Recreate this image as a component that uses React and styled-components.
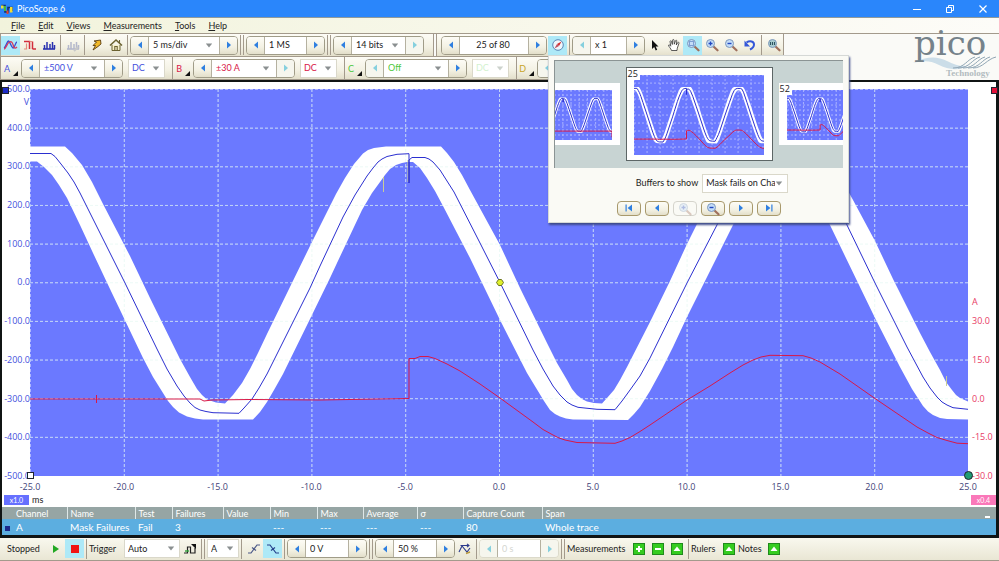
import styled, { createGlobalStyle, css } from 'styled-components'

const colors = {
  plot: '#6b79ff',
  blue: '#2b2fd0',
  axisBlue: '#4450dd',
  red: '#d81848',
  axisRed: '#e83a64',
  green: '#4cc83c',
  gold: '#c8a428',
  arrow: '#2f7fe0',
  line: '#a39a8c',
  hot: '#aee9f7',
}

const MASK_TOP = '30,146.5 65,146.5 72,153 82,165 92,182 103,204 130,256 150,298 180,359 190,377 197,389 202,395 207,399.5 216,402.5 225,403.5 233,395 242,383 250,369 258,353 267,334 310,246 320,226 336,194 345,178 354,164 363,153.5 368,150 374,148 386,146.5 441,146.5 447,153 454,162 462,175 470,190 500,245 520,288 547,343 557,363 567,380 572,389 577,395 582,399 587,401.5 594,403 602,403.5 607,398 614,390 620,380 627,367 650,322 670,281 687,244 705,208 725,171 735,157 742,151 752,147 764,146.5 816,146.5 826,156 838,173 853,200 875,241 893,279 920,333 930,352 940,370 946,382 952,390 956,395 960,398 968,401.5'
const MASK_BOTTOM = '968,419.5 947,419 940,418 933,415 928,411.5 923,406 912,389 900,367 875,318 829,223 808,181 796,166 788,162.5 780,163 768,170 756,183 734,223 707,277 687,317 673,347 662,369 650,391 640,407 634,414 628,420 573,419.5 566,418.5 560,416.5 555,414 550,410 544,401 527,373 500,320 470,258 443,206 435,191 427,178 420,168 413,162 407,162 402,163 396,165 390,169 385,175 380,182 372,193 362,210 337,263 330,278 310,319 283,374 274,390 267,402 260,412 253,419.5 203,419.5 195,418.5 187,416.5 179,412.5 173,407 168,401 163,393 153,377 143,358 110,289 93,253 80,225 67,198 59,185 52,175 44,167 37,161.5 30,161.5'
const TRACE_A = '30,153.5 51,153.5 55,156.5 61,164 68,173 74,182 80,193 95,223 125,283 157,349 167,369 177,386 184,396 190,403 195,407.5 200,410 206,411.5 213,412.7 239,413.3 244,408 252,399 259,388 267,374 310,288 320,266 343,217 355,195 367,176 373,168 378,162 382,159 387,156.5 397,154.3 409,153.7 409,183 409,160 412,157.5 425,157.5 429,159 433,162 440,170 454,192 480,243 500,282.5 533,350 543,369 553,386 560,395 567,402 572,405 578,407.3 597,409.3 615,409.7 622,401 630,390 640,376 650,358 687,283 718,223 740,182 752,165 762,157 775,154 800,154 808,157 820,172 846,223 875,283 907,347 923,377 930,388 937,397 942,402 947,405 953,407.7 968,409.3'
const TRACE_B = '30,399 200,399 204,401 212,400 250,399.5 320,400 409,398.5 409,358.5 415,358.5 420,356.5 428,356.5 435,358.5 447,364 460,371 480,384 500,398 533,422 543,429.5 553,435 559,438 565,440 577,442.5 615,443.3 622,441 630,437.5 640,431.5 650,425 687,400 710,386 730,373 743,365 753,360 761,357 770,355.3 803,355.7 811,358 820,362 840,374 875,398.5 917,427 928,433 937,437.5 947,440.5 957,443.2 968,443.7'
const FLAT_B = '30,407 968,407 968,455'

const H_LINES = [0, 1, 2, 3, 4, 5, 6, 7, 8, 9].map((n) => 89.5 + n * 38.65)
const V_LINES = [0, 1, 2, 3, 4, 5, 6, 7, 8, 9].map((n) => 30.5 + n * 93.8)

const TICKS_V = ['500.0', '400.0', '300.0', '200.0', '100.0', '0.0', '-100.0', '-200.0', '-300.0', '-400.0', '-500.0']
const TICKS_A = ['', '', '', '', '', '', '30.0', '15.0', '0.0', '-15.0', '-30.0']
const TICKS_MS = ['-25.0', '-20.0', '-15.0', '-10.0', '-5.0', '0.0', '5.0', '10.0', '15.0', '20.0', '25.0']

const COLUMNS = [
  ['Channel', 'A', 65],
  ['Name', 'Mask Failures', 68],
  ['Test', 'Fail', 37],
  ['Failures', '3', 51],
  ['Value', '', 47],
  ['Min', '---', 47],
  ['Max', '---', 46],
  ['Average', '---', 54],
  ['σ', '---', 46],
  ['Capture Count', '80', 79],
  ['Span', 'Whole trace', null],
]

/* ---------- icons ---------- */

function ArrowIcon({ back }) {
  return (
    <svg width="6" height="8" viewBox="0 0 6 8" aria-hidden="true">
      <path d={back ? 'M5 0.5v7L1 4z' : 'M1 0.5v7L5 4z'} fill="currentColor" />
    </svg>
  )
}

function EndIcon({ back }) {
  return (
    <svg width="10" height="8" viewBox="0 0 10 8" aria-hidden="true" fill="currentColor">
      {back ? <path d="M1.5 0.5h1.2v7H1.5zM8 0.5v7L3.6 4z" /> : <path d="M7.3 0.5h1.2v7H7.3zM2 0.5v7L6.4 4z" />}
    </svg>
  )
}

function ChevronIcon() {
  return (
    <svg width="8" height="5" viewBox="0 0 8 5" aria-hidden="true">
      <path d="M0.8 0.5h6.4L4 4.5z" fill="currentColor" />
    </svg>
  )
}

function AppIcon() {
  return (
    <svg width="14" height="14" viewBox="0 0 14 14" aria-hidden="true">
      <path d="M2 6V3.500h3V10h3V5.500h4V9" fill="none" stroke="#17306e" strokeWidth="1.600" />
      <path d="M1 3.500h2.500v3H1z" fill="#e8e23a" />
      <path d="M4 4h2v5H4z" fill="#46b83c" />
      <path d="M6.500 8.500h2V12h-2z" fill="#e0452c" />
      <path d="M10 5h2.500v5.500H10z" fill="#f2dc30" />
    </svg>
  )
}

function ScopeIcon() {
  return (
    <svg width="15" height="14" viewBox="0 0 15 14" fill="none" aria-hidden="true">
      <path d="M1 10C3 9 4 3 5.500 3S8 9.500 10 10s2-6 4-6" stroke="#3a4bd0" strokeWidth="1.300" />
      <path d="M1 11C3 11 4 5 6.500 4s3 1 4 4 2 2.500 3.500 1" stroke="#d83a5c" strokeWidth="1.300" />
    </svg>
  )
}

function PersistenceIcon() {
  return (
    <svg width="14" height="14" viewBox="0 0 14 14" fill="none" aria-hidden="true">
      <path d="M1 3.500h5.500v7.500M9.500 11V3.500M9.500 11H13" stroke="#d22c3c" strokeWidth="1.500" />
      <path d="M1 11h2.500V5.500M6.500 3.500h3" stroke="#e58a7c" strokeWidth="1.200" />
    </svg>
  )
}

function SpectrumIcon({ faded }) {
  return (
    <svg width="14" height="14" viewBox="0 0 14 14" fill="none" stroke={faded ? '#b4b8cc' : '#2a32b0'} aria-hidden="true">
      <path d="M1 11h12" strokeWidth="1.600" />
      <path d="M2.500 11V7M5 11V4M8 11V6M10.500 11V4M12.500 11V7" strokeWidth="1.500" />
      {faded && <path d="M8 13l4-4" stroke="#c8c8c8" strokeWidth="2" />}
    </svg>
  )
}

function BoltIcon() {
  return (
    <svg width="13" height="14" viewBox="0 0 13 14" aria-hidden="true">
      <path d="M4 3l6.500-1 .5 4-3 2.500L3 12l2.500-4.500H3L6.500 4z" fill="#f0b828" stroke="#5a3c10" strokeWidth=".9" />
    </svg>
  )
}

function HomeIcon() {
  return (
    <svg width="14" height="14" viewBox="0 0 14 14" aria-hidden="true">
      <path d="M3 7v5.500h8V7" fill="#f5efc8" stroke="#6b6230" />
      <path d="M1 7.500L7 2l6 5.500" fill="none" stroke="#6b6230" strokeWidth="1.600" />
      <path d="M5.800 12V8.500h2.400V12M10.500 2v3" fill="none" stroke="#6b6230" strokeWidth="1.100" />
    </svg>
  )
}

function CompassIcon() {
  return (
    <svg width="14" height="14" viewBox="0 0 14 14" aria-hidden="true">
      <circle cx="7" cy="7" r="5.300" fill="#eef6fc" stroke="#5c88b8" />
      <path d="M10.500 3.500L8 8 6 6z" fill="#d42a2a" />
      <path d="M3.500 10.500L6 6l2 2z" fill="#c05060" />
    </svg>
  )
}

function PointerIcon() {
  return (
    <svg width="12" height="14" viewBox="0 0 12 14" aria-hidden="true">
      <path d="M3 2v9l2.200-2 1.500 3.500 1.500-.7L6.700 8.500H9.500z" fill="#111" />
    </svg>
  )
}

function HandIcon() {
  return (
    <svg width="14" height="14" viewBox="0 0 14 14" aria-hidden="true">
      <path d="M4.500 12.500C4 10.500 1.500 8.500 1.500 7.200c.6-.8 1.500 0 2.300 1L3 3.500c.2-1 1.300-1 1.500 0L5.300 6.500 5.500 2.200c.3-1 1.400-.9 1.500 0l.3 4L8.500 2.700c.4-.8 1.400-.5 1.300.3L9.300 7l1.500-2.500c.6-.6 1.400-.1 1.200.7l-1.700 5-.3 2.300z" fill="#fff" stroke="#333" strokeWidth=".8" />
    </svg>
  )
}

function ZoomIcon({ mark, faded }) {
  return (
    <svg width="14" height="14" viewBox="0 0 14 14" opacity={faded ? 0.35 : 1} aria-hidden="true">
      <path d="M8.500 8.500l4 3.800" stroke="#a0705c" strokeWidth="2.200" strokeLinecap="round" />
      <circle cx="5.500" cy="5.500" r="4" fill={mark === 'all' ? '#a9cdd0' : '#c4ddf8'} stroke="#7e98bc" />
      {mark === 'box' && <path d="M3.500 3.500h4v4h-4z" fill="none" stroke="#3660b0" strokeDasharray="1 1" />}
      {mark === 'plus' && <path d="M3.500 5.500h4M5.500 3.500v4" stroke="#2348c0" strokeWidth="1.300" />}
      {mark === 'minus' && <path d="M3.500 5.500h4" stroke="#2348c0" strokeWidth="1.400" />}
      {mark === 'all' && <path d="M3.500 4v3M5.500 4v3M7.500 4v3" stroke="#2d5460" strokeWidth="1.100" />}
    </svg>
  )
}

function UndoIcon() {
  return (
    <svg width="14" height="14" viewBox="0 0 14 14" aria-hidden="true">
      <path d="M3.500 4.500C7 2 11 3.500 11 6.500S9 10.500 7 11.500" fill="none" stroke="#3558d8" strokeWidth="2" />
      <path d="M1.500 2.500v6h5.500z" fill="#3558d8" />
    </svg>
  )
}

function TriggerIcon() {
  return (
    <svg width="14" height="14" viewBox="0 0 14 14" fill="none" aria-hidden="true">
      <path d="M1 11h3.500V5h3v6H12V6" stroke="#222" strokeWidth="1.200" />
      <path d="M2 9h4" stroke="#2fa43a" strokeWidth="1.400" />
      <path d="M8 2h5v5z" fill="#111" />
    </svg>
  )
}

function EdgeIcon({ falling }) {
  return (
    <svg width="14" height="14" viewBox="0 0 14 14" fill="none" aria-hidden="true">
      {falling ? (
        <path d="M1 3h3l6 8h3M5 8.500l4-3" stroke="#24408c" strokeWidth="1.200" />
      ) : (
        <path d="M1 11h3l6-8h3M5 5.500l4 3" stroke="#4a5888" strokeWidth="1.200" />
      )}
    </svg>
  )
}

function DelayIcon() {
  return (
    <svg width="14" height="14" viewBox="0 0 14 14" fill="none" aria-hidden="true">
      <path d="M1 10l3-6 5 6 3-4M2.500 3.500h8M9 1.800l2 1.700-2 1.700" stroke="#2c3a8c" strokeWidth="1.100" />
      <path d="M8 11.500l4-1.500" stroke="#b8983c" strokeWidth="1.500" />
    </svg>
  )
}

function GreenIcon({ mark }) {
  const marks = { plus: 'M3 6h6M6 3v6', minus: 'M3 6h6' }
  return (
    <svg width="12" height="12" viewBox="0 0 12 12" aria-hidden="true">
      <rect x=".5" y=".5" width="11" height="11" fill="#35cc20" stroke="#1f8a1c" />
      {marks[mark] ? <path d={marks[mark]} stroke="#fff" strokeWidth="2" /> : <path d="M2.500 8L6 3.500 9.500 8z" fill="#fff" />}
    </svg>
  )
}

/* ---------- chart ---------- */

function WaveChart({ label, main, redTrace = TRACE_B }) {
  return (
    <ChartSvg viewBox="30 89 938 387" preserveAspectRatio="none" role="img" aria-label={label}>
      <rect x="30" y="89" width="938" height="387" fill={colors.plot} />
      <g stroke="#d4daff" strokeDasharray={main ? '3 2' : '2 2'} opacity={main ? 0.65 : 0.6}>
        {H_LINES.map((y) => <line key={y} x1="30" x2="968" y1={y} y2={y} />)}
        {V_LINES.map((x) => <line key={x} x1={x} x2={x} y1="89" y2="476" />)}
      </g>
      <polygon points={`${MASK_TOP} ${MASK_BOTTOM}`} fill="#fff" />
      {main && (
        <g stroke="#d8f6ee" strokeDasharray="3 2" opacity="0.45">
          {H_LINES.slice(1).map((y) => <line key={y} x1="30" x2="968" y1={y} y2={y} />)}
          {V_LINES.slice(1).map((x) => <line key={x} x1={x} x2={x} y1="89" y2="476" />)}
        </g>
      )}
      {main && <path d="M383.500 177v15M408 160v22M946.500 376v10" stroke="#c8cc96" />}
      <polyline points={TRACE_A} fill="none" stroke={colors.blue} />
      <polyline points={redTrace} fill="none" stroke={colors.red} />
      {main && <path d="M96.500 395v8" stroke={colors.red} />}
      {main && <path d="M496.500 282.500l2-3h3l2 3-2 3h-3z" fill="#dff02c" stroke="#6c7420" />}
    </ChartSvg>
  )
}

function Axis({ ticks, side, unit, unitAt }) {
  return (
    <AxisColumn $side={side}>
      {ticks.map((tick, i) => (
        <AxisTick key={i} $side={side}>
          {tick}
          {i === unitAt && <AxisUnit $side={side}>{unit}</AxisUnit>}
        </AxisTick>
      ))}
    </AxisColumn>
  )
}

/* ---------- controls ---------- */

function Dropdown({ label, value, width, color, disabled }) {
  return (
    <DropdownBox $width={width} $disabled={disabled}>
      <DropdownSelect aria-label={label} defaultValue={value} disabled={disabled} $color={color}>
        <option>{value}</option>
      </DropdownSelect>
      <ChevronIcon />
    </DropdownBox>
  )
}

function Stepper({ label, value, width, color, select, center, offBack, offNext, disabled }) {
  return (
    <StepperBox $disabled={disabled}>
      <StepButton type="button" aria-label={`${label} down`} disabled={offBack || disabled}><ArrowIcon back /></StepButton>
      <StepperValue $width={width}>
        {select ? (
          <>
            <DropdownSelect aria-label={label} defaultValue={value} $color={color}>
              <option>{value}</option>
            </DropdownSelect>
            <ChevronIcon />
          </>
        ) : (
          <StepperInput aria-label={label} defaultValue={value} disabled={disabled} $center={center} />
        )}
      </StepperValue>
      <StepButton type="button" aria-label={`${label} up`} disabled={offNext || disabled}><ArrowIcon /></StepButton>
    </StepperBox>
  )
}

function Channel({ name, color, range, offBack, offNext, off }) {
  return (
    <ChannelGroup>
      <ChannelButton type="button" $color={color}>
        {name}
        <svg width="5" height="5" viewBox="0 0 5 5" aria-hidden="true"><path d="M5 0v5H0z" fill="#111" /></svg>
      </ChannelButton>
      <Stepper label={`Channel ${name} range`} value={range} width={66} color={color} select offBack={offBack} offNext={offNext} />
      <Dropdown label={`Channel ${name} coupling`} value="DC" width={37} color={color} disabled={off} />
    </ChannelGroup>
  )
}

function BufferNavigator() {
  return (
    <Popup role="dialog" aria-label="Buffer navigator">
      <ThumbStrip>
        <Thumb><WaveChart label="Previous buffer" redTrace={FLAT_B} /></Thumb>
        <Thumb $selected><ThumbNumber>25</ThumbNumber><WaveChart label="Buffer 25" /></Thumb>
        <Thumb><ThumbNumber>52</ThumbNumber><WaveChart label="Buffer 52" /></Thumb>
      </ThumbStrip>
      <BuffersRow>
        <span>Buffers to show</span>
        <Dropdown label="Buffers to show" value="Mask fails on Channel A" width={86} />
      </BuffersRow>
      <PopupButtons>
        <RoundButton type="button" aria-label="First buffer"><EndIcon back /></RoundButton>
        <RoundButton type="button" aria-label="Previous buffer"><ArrowIcon back /></RoundButton>
        <RoundButton type="button" aria-label="Zoom in" disabled><ZoomIcon mark="plus" faded /></RoundButton>
        <RoundButton type="button" aria-label="Zoom out"><ZoomIcon mark="minus" /></RoundButton>
        <RoundButton type="button" aria-label="Next buffer"><ArrowIcon /></RoundButton>
        <RoundButton type="button" aria-label="Last buffer"><EndIcon /></RoundButton>
      </PopupButtons>
    </Popup>
  )
}

function Logo() {
  return (
    <LogoSvg width="90" height="46" viewBox="0 0 90 46" role="img" aria-label="pico Technology">
      <path d="M4 29c14-7 24-7 34-2s16 6 22 4c-10 6-20 5-30 0S14 27 4 29z" fill="#cbdde8" />
      <g fill="none" stroke="#8fa5b4" strokeWidth="1">
        <path d="M44 34c12 0 14-9 22-11M49 34c12 0 14-9 22-11M54 34c12 0 14-9 22-11M59 34c12 0 14-9 22-11M64 34c10 0 14-9 23-11" />
      </g>
      <text x="5" y="21" fontFamily="'DejaVu Serif', serif" fontSize="34" fill="#75828a">pico</text>
      <text x="37" y="42" fontFamily="'Liberation Serif', serif" fontSize="9" fontWeight="700" fill="#b3bcc0">Technology</text>
    </LogoSvg>
  )
}

/* ---------- page ---------- */

export default function App() {
  return (
    <Window>
      <GlobalStyle />
      <TitleBar>
        <AppIcon />
        <Title>PicoScope 6</Title>
        <CaptionButton type="button" aria-label="Minimise">
          <svg width="10" height="10" viewBox="0 0 10 10"><path d="M1 5.500h8" stroke="#fff" /></svg>
        </CaptionButton>
        <CaptionButton type="button" aria-label="Restore">
          <svg width="10" height="10" viewBox="0 0 10 10" fill="none" stroke="#fff"><path d="M1.500 3.500h5v5h-5zM3.500 3.500v-2h5v5h-2" /></svg>
        </CaptionButton>
        <CaptionButton type="button" aria-label="Close">
          <svg width="10" height="10" viewBox="0 0 10 10" stroke="#fff" strokeWidth="1.200"><path d="M1.500 1.500l7 7M8.500 1.500l-7 7" /></svg>
        </CaptionButton>
      </TitleBar>

      <MenuBar>
        {['File', 'Edit', 'Views', 'Measurements', 'Tools', 'Help'].map((item) => (
          <MenuButton key={item} type="button"><u>{item[0]}</u>{item.slice(1)}</MenuButton>
        ))}
      </MenuBar>

      <ToolArea>
        <ToolRows>
          <ToolRow>
            <Band>
              <IconButton type="button" aria-label="Scope mode" $active><ScopeIcon /></IconButton>
              <IconButton type="button" aria-label="Persistence mode"><PersistenceIcon /></IconButton>
              <IconButton type="button" aria-label="Spectrum mode"><SpectrumIcon /></IconButton>
              <Separator />
              <IconButton type="button" aria-label="Spectrum options" disabled><SpectrumIcon faded /></IconButton>
              <Separator />
              <IconButton type="button" aria-label="Auto setup"><BoltIcon /></IconButton>
              <IconButton type="button" aria-label="Home"><HomeIcon /></IconButton>
              <Separator />
              <Stepper label="Timebase" value="5 ms/div" width={72} select />
              <Separator $double />
              <Stepper label="Samples" value="1 MS" width={43} />
              <Separator $double />
              <Stepper label="Resolution" value="14 bits" width={55} select offNext />
            </Band>
            <Band>
              <Stepper label="Buffer" value="25 of 80" width={70} center />
              <PopupAnchor>
                <IconButton type="button" aria-label="Buffer navigator" $active><CompassIcon /></IconButton>
                <BufferNavigator />
              </PopupAnchor>
              <Separator />
              <Stepper label="Zoom factor" value="x 1" width={37} offBack />
              <IconButton type="button" aria-label="Select"><PointerIcon /></IconButton>
              <IconButton type="button" aria-label="Pan"><HandIcon /></IconButton>
              <IconButton type="button" aria-label="Zoom to area" $active><ZoomIcon mark="box" /></IconButton>
              <IconButton type="button" aria-label="Zoom in"><ZoomIcon mark="plus" /></IconButton>
              <IconButton type="button" aria-label="Zoom out"><ZoomIcon mark="minus" /></IconButton>
              <IconButton type="button" aria-label="Undo zoom"><UndoIcon /></IconButton>
              <Separator />
              <IconButton type="button" aria-label="Zoom to full view"><ZoomIcon mark="all" /></IconButton>
            </Band>
          </ToolRow>
          <ToolRow>
            <Channel name="A" color={colors.axisBlue} range="±500 V" />
            <Channel name="B" color={colors.red} range="±30 A" offNext />
            <Channel name="C" color={colors.green} range="Off" offBack off />
            <Channel name="D" color={colors.gold} range="Off" offBack off />
          </ToolRow>
        </ToolRows>
        <Logo />
      </ToolArea>

      <ScopeFrame>
        <ScopeView>
          <Axis ticks={TICKS_V} side="left" unit="V" unitAt={0} />
          <PlotCell>
            <WaveChart label="Mask test waveform" main />
          </PlotCell>
          <Axis ticks={TICKS_A} side="right" unit="A" unitAt={6} />
          <AxisHandle $corner="topLeft" />
          <AxisHandle $corner="topRight" />
          <AxisHandle $corner="bottomLeft" />
          <AxisHandle $corner="bottomRight" />
        </ScopeView>
        <TimeAxis>
          {TICKS_MS.map((tick) => <TimeTick key={tick}>{tick}</TimeTick>)}
        </TimeAxis>
        <ScaleRow>
          <ScaleBadge $color="#6670ff">x1.0</ScaleBadge>
          <span>ms</span>
          <ScaleBadge $color="#fa78b9" $end>x0.4</ScaleBadge>
        </ScaleRow>
        <MeasureTable>
          <colgroup>
            {COLUMNS.map(([name, , width]) => <col key={name} width={width ?? undefined} />)}
          </colgroup>
          <thead>
            <tr>{COLUMNS.map(([name]) => <th key={name} scope="col">{name}{name === 'Span' && <CollapseMark />}</th>)}</tr>
          </thead>
          <tbody>
            <tr>{COLUMNS.map(([name, value]) => <td key={name}>{name === 'Channel' && <ChannelMark />}{value}</td>)}</tr>
          </tbody>
        </MeasureTable>
      </ScopeFrame>

      <StatusBar>
        <StatusText $width={39}>Stopped</StatusText>
        <IconButton type="button" aria-label="Start">
          <svg width="8" height="10" viewBox="0 0 8 10"><path d="M1 1v8l6-4z" fill="#22a822" /></svg>
        </IconButton>
        <IconButton type="button" aria-label="Stop" $active>
          <svg width="8" height="8" viewBox="0 0 8 8"><path d="M0 0h8v8H0z" fill="#f01414" /></svg>
        </IconButton>
        <Separator />
        <StatusText $width={35}>Trigger</StatusText>
        <Dropdown label="Trigger mode" value="Auto" width={56} />
        <IconButton type="button" aria-label="Advanced triggering"><TriggerIcon /></IconButton>
        <Separator $double />
        <Dropdown label="Trigger channel" value="A" width={32} />
        <Separator />
        <IconButton type="button" aria-label="Rising edge"><EdgeIcon /></IconButton>
        <IconButton type="button" aria-label="Falling edge" $active><EdgeIcon falling /></IconButton>
        <Separator />
        <Stepper label="Threshold" value="0 V" width={44} />
        <Separator $double />
        <Stepper label="Pre-trigger" value="50 %" width={44} />
        <IconButton type="button" aria-label="Trigger delay"><DelayIcon /></IconButton>
        <Separator />
        <Stepper label="Delay" value="0 s" width={44} disabled />
        <Separator $double />
        <StatusText $width={62}>Measurements</StatusText>
        <IconButton type="button" aria-label="Add measurement"><GreenIcon mark="plus" /></IconButton>
        <IconButton type="button" aria-label="Remove measurement"><GreenIcon mark="minus" /></IconButton>
        <IconButton type="button" aria-label="Edit measurements"><GreenIcon /></IconButton>
        <Separator />
        <StatusText $width={28}>Rulers</StatusText>
        <IconButton type="button" aria-label="Ruler options"><GreenIcon /></IconButton>
        <StatusText $width={26}>Notes</StatusText>
        <IconButton type="button" aria-label="Show notes"><GreenIcon /></IconButton>
      </StatusBar>
    </Window>
  )
}

const GlobalStyle = createGlobalStyle`
  * { box-sizing: border-box; }
  body { margin: 0; }
  button, input, select { font: inherit; margin: 0; padding: 0; }
`

const cream = css`
  background: linear-gradient(#fdfcf6, #f3f1e3 60%, #e3dfca);
`

const axisFont = css`
  font-family: 'Open Sans', 'Noto Sans', sans-serif;
  font-size: 9px;
`

const Window = styled.div`
  display: flex;
  flex-direction: column;
  min-height: 100vh;
  overflow: hidden;
  font-family: Lato, 'Open Sans', sans-serif;
  font-size: 9px;
  line-height: 12px;
  color: #222;
  background: #fafaf5;
`

const TitleBar = styled.header`
  display: flex;
  align-items: center;
  height: 17px;
  background: #2a86fb;
`

const Title = styled.span`
  flex: 1;
  padding-left: 3px;
  color: #fff;
`

const CaptionButton = styled.button`
  display: grid;
  place-items: center;
  width: 33px;
  height: 17px;
  border: 0;
  background: none;
`

const MenuBar = styled.nav`
  display: flex;
  gap: 13px;
  height: 17px;
  padding-left: 11px;
  border-top: 1px solid #8f9a9c;
  border-bottom: 1px solid ${colors.line};
  background: linear-gradient(90deg, #f2f3dc, #fdfcf8);
`

const MenuButton = styled.button`
  border: 0;
  background: none;
  color: #222;
`

const ToolArea = styled.div`
  display: flex;
  justify-content: space-between;
  height: 46px;
  border-left: 1px solid ${colors.line};
  background: #fafaf7;
`

const ToolRows = styled.div`
  display: flex;
  flex-direction: column;
`

const ToolRow = styled.div`
  display: flex;
  height: 23px;
  border-bottom: 1px solid ${colors.line};
`

const LogoSvg = styled.svg`
  overflow: visible;
`

const Band = styled.div`
  display: flex;
  align-items: center;
  padding-right: 9px;
  border-right: 1px solid ${colors.line};
  ${cream}

  & + & {
    margin-left: 2px;
    padding: 0 0 0 4px;
    border-left: 1px solid ${colors.line};
  }
`

const Separator = styled.i`
  flex: none;
  width: ${(p) => (p.$double ? 4 : 1)}px;
  height: 20px;
  margin: 0 2px;
  border-left: 1px solid ${colors.line};
  border-right: ${(p) => (p.$double ? `1px solid ${colors.line}` : 0)};
`

const IconButton = styled.button`
  display: grid;
  place-items: center;
  flex: none;
  width: 19px;
  height: 19px;
  border: 0;
  background: ${(p) => (p.$active ? colors.hot : 'none')};
`

const StepperBox = styled.div`
  display: flex;
  flex: none;
  height: 19px;
  border: 1px solid ${(p) => (p.$disabled ? '#dcdacb' : '#a09c88')};
  border-radius: 4px;
  overflow: hidden;
`

const StepButton = styled.button`
  display: grid;
  place-items: center;
  width: 17px;
  border: 0;
  color: ${colors.arrow};
  ${cream}

  &:disabled {
    color: #86d0de;
    background: #f6f6ee;
  }
`

const StepperValue = styled.div`
  display: flex;
  align-items: center;
  width: ${(p) => p.$width}px;
  padding: 0 6px 0 4px;
  border: solid #b5b1a0;
  border-width: 0 1px;
  color: #8a8f90;
  background: #fff;
`

const StepperInput = styled.input`
  width: 100%;
  border: 0;
  text-align: ${(p) => (p.$center ? 'center' : 'left')};
  color: #222;
  background: none;

  &:disabled {
    color: #d4d6d0;
  }
`

const DropdownBox = styled.div`
  display: flex;
  align-items: center;
  flex: none;
  width: ${(p) => p.$width}px;
  height: 19px;
  padding: 0 4px 0 3px;
  border: 1px solid #dad8ca;
  color: ${(p) => (p.$disabled ? '#ccd2cc' : '#8a8f90')};
  background: #fff;
`

const DropdownSelect = styled.select`
  flex: 1;
  min-width: 0;
  appearance: none;
  border: 0;
  background: none;
  text-overflow: clip;
  color: ${(p) => p.$color ?? '#222'};

  &:disabled {
    opacity: 0.25;
  }
`

const ChannelGroup = styled.div`
  display: flex;
  align-items: center;
  gap: 5px;
  width: 172px;
  border-right: 1px solid ${colors.line};
  ${cream}
`

const ChannelButton = styled.button`
  display: flex;
  align-items: flex-end;
  justify-content: flex-end;
  gap: 3px;
  width: 17px;
  height: 16px;
  margin-right: -2px;
  border: 0;
  line-height: 14px;
  color: ${(p) => p.$color};
  background: none;
`

const PopupAnchor = styled.div`
  position: relative;
  padding-left: 1px;
`

const Popup = styled.section`
  position: absolute;
  z-index: 2;
  top: 19px;
  left: 1px;
  width: 301px;
  padding: 4px 5px 6px;
  border: 1px solid #d5d8d6;
  background: #fafaf5;
  box-shadow: 1px 2px 2px #3c4a8a;
`

const ThumbStrip = styled.div`
  display: flex;
  align-items: center;
  justify-content: center;
  gap: 6px;
  height: 108px;
  border-top: 1px solid #8b9494;
  border-left: 1px solid #8b9494;
  background: #c8d4d3;
  overflow: hidden;
`

const Thumb = styled.div`
  position: relative;
  flex: none;
  width: ${(p) => (p.$selected ? 147 : 98)}px;
  height: ${(p) => (p.$selected ? 94 : 62)}px;
  padding: ${(p) => (p.$selected ? '7px 8px 5px 7px' : '7px 8px 5px')};
  border: ${(p) => (p.$selected ? '1px solid #5d6666' : 0)};
  background: #fff;
`

const ThumbNumber = styled.span`
  position: absolute;
  top: 0;
  left: 0;
  padding: 0 2px 0 1px;
  ${axisFont}
  background: #fff;
`

const BuffersRow = styled.div`
  display: flex;
  justify-content: center;
  gap: 4px;
  padding: 6px 0 8px 27px;

  span {
    line-height: 17px;
  }
`

const PopupButtons = styled.div`
  display: flex;
  justify-content: center;
  gap: 4px;
`

const RoundButton = styled.button`
  display: grid;
  place-items: center;
  width: 24px;
  height: 15px;
  border: 1px solid #a8996c;
  border-radius: 4px;
  color: ${colors.arrow};
  ${cream}

  &:disabled {
    border-color: #d5d4cc;
    background: #fafaf5;
  }
`

const ScopeFrame = styled.main`
  display: flex;
  flex: 1;
  flex-direction: column;
  padding-top: 7px;
  border: solid #101414;
  border-width: 2px 3px 3px 2px;
  background: #fff;
`

const ScopeView = styled.div`
  position: relative;
  display: grid;
  grid-template-columns: 28px 1fr 28px;
  flex: 1;
`

const PlotCell = styled.div`
  display: grid;
  min-height: 0;
`

const ChartSvg = styled.svg`
  display: block;
  width: 100%;
  height: 100%;

  line, polyline, path {
    vector-effect: non-scaling-stroke;
  }
`

const AxisColumn = styled.div`
  display: flex;
  flex-direction: column;
  justify-content: space-between;
  padding-left: ${(p) => (p.$side === 'right' ? 4 : 0)}px;
  ${axisFont}
  color: ${(p) => (p.$side === 'left' ? colors.axisBlue : colors.axisRed)};
`

const AxisTick = styled.div`
  position: relative;
  display: flex;
  align-items: center;
  justify-content: ${(p) => (p.$side === 'left' ? 'flex-end' : 'flex-start')};
  height: 0;
`

const AxisUnit = styled.span`
  position: absolute;
  ${(p) => (p.$side === 'left' ? 'top: 7px; right: 1px;' : 'bottom: 13px; left: 0;')}
`

const handleCorners = {
  topLeft: 'top: -2px; left: 0; background: #1c2bc8;',
  topRight: 'top: -2px; right: -2px; background: #e01038;',
  bottomLeft: 'bottom: -3px; left: 25px; background: #fff;',
  bottomRight: 'bottom: -4px; right: 23px; width: 9px; height: 9px; border-radius: 50%; background: #1f9c74;',
}

const AxisHandle = styled.span`
  position: absolute;
  width: 7px;
  height: 7px;
  border: 1px solid #202430;
  ${(p) => handleCorners[p.$corner]}
`

const TimeAxis = styled.div`
  display: flex;
  justify-content: space-between;
  height: 18px;
  padding: 7px 28px 0;
  ${axisFont}
  line-height: 8px;
  color: #3f4478;
`

const TimeTick = styled.span`
  display: flex;
  justify-content: center;
  width: 0;
`

const ScaleRow = styled.div`
  display: flex;
  align-items: center;
  gap: 3px;
  height: 13px;
  padding: 0 0 2px 2px;
`

const ScaleBadge = styled.span`
  width: 25px;
  height: 10px;
  margin-left: ${(p) => (p.$end ? 'auto' : 0)};
  font-size: 7px;
  line-height: 10px;
  text-align: center;
  color: #fff;
  background: ${(p) => p.$color};
`

const MeasureTable = styled.table`
  width: 100%;
  table-layout: fixed;
  border-collapse: collapse;
  color: #fff;

  th, td {
    padding: 0 0 0 3px;
    text-align: left;
    white-space: nowrap;
  }

  th {
    height: 12px;
    padding-top: 1px;
    border-left: 1px solid #dfe8e8;
    font-weight: 400;
    line-height: 11px;
    background: #96a5a4;
  }

  td {
    height: 16px;
    font-size: 10px;
    line-height: 16px;
    background: #5caee0;
  }

  th:first-child {
    padding-left: 14px;
    border-left: 0;
  }
`

const ChannelMark = styled.i`
  display: inline-block;
  width: 5px;
  height: 5px;
  margin-right: 6px;
  vertical-align: middle;
  background: #1c2a8c;
`

const CollapseMark = styled.i`
  float: right;
  width: 5px;
  height: 2px;
  margin: 8px 6px 0 0;
  background: #fff;
`

const StatusBar = styled.footer`
  display: flex;
  align-items: center;
  height: 23px;
  padding: 0 0 1px 7px;
  border-bottom: 1px solid ${colors.line};
  background: linear-gradient(#f9f8ee, #e9e6d4);
`

const StatusText = styled.span`
  flex: none;
  width: ${(p) => p.$width}px;
`
